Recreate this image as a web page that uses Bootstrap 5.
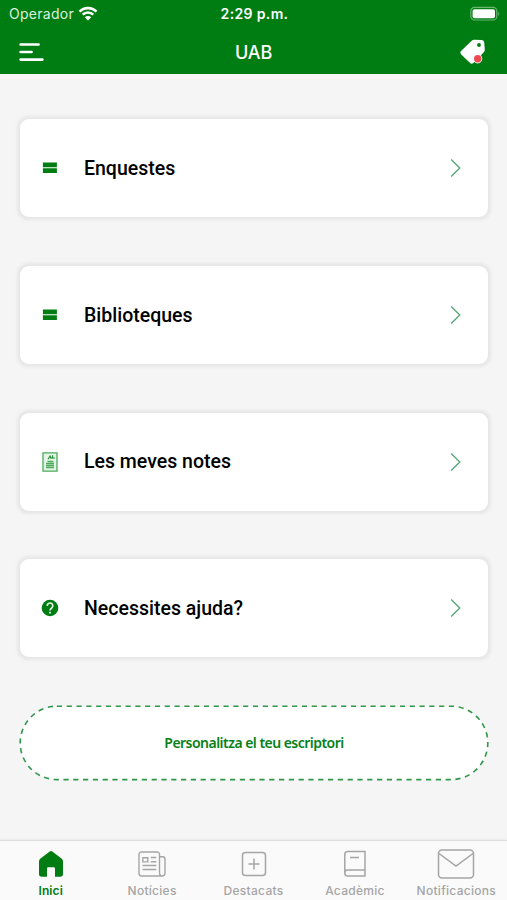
<!DOCTYPE html>
<html lang="ca">
<head>
<meta charset="utf-8">
<meta name="viewport" content="width=device-width, initial-scale=1">
<title>UAB</title>
<link href="https://cdn.jsdelivr.net/npm/bootstrap@5.3.0/dist/css/bootstrap.min.css" rel="stylesheet">
<style>
  body { height: 900px; background: #f5f5f5; font-family: Inter, "Liberation Sans", sans-serif; overflow: hidden; }
  svg { display: block; flex: none; }
  .app-head { background: #007d12; height: 74px; color: #fff; }
  .status-row { height: 27px; padding: 0 7px 0 9px; }
  .status-row > *, .title-row > * { flex: 1 1 0; }
  .carrier { font-size: 14px; letter-spacing: .28px; color: #dcf0de; }
  .clock { font-size: 14px; font-weight: 600; letter-spacing: .36px; }
  .title-row { height: 47px; padding: 3px 20px 0 19px; }
  .app-title { font-size: 18px; font-weight: 500; letter-spacing: -.1px; padding-left: 1px; }
  .tiles { padding: 45.4px 19px 0 20px; gap: 48.7px; }
  .tile { height: 98px; border-radius: 9px; background: #fff; box-shadow: 0 0 3px 2.5px #e7e7e7; color: #000; padding: 0 26px 0 20px; }
  .tile-icon { width: 20px; margin-right: 24px; }
  .tile-name { font: 500 19.5px/24px Roboto, sans-serif; padding-top: 1px; }
  .customize { margin: 47.6px 18px 0 19px; height: 76px; color: #078117; }
  .customize-label { font: 600 14px/20px "Noto Sans", sans-serif; letter-spacing: -.53px; }
  .tabs-bar { height: 60px; background: #fafafa; border-top: 1px solid #dedede; box-shadow: 0 -1px 2px #e9e9e9; color: #a5a5a5; }
  .tab-item { flex: 1 1 0; color: inherit; }
  .tab-icon { height: 43px; padding-top: 2px; }
  .tab-label { font-size: 12px; line-height: 14px; font-weight: 500; white-space: nowrap; letter-spacing: .28px; }
  .tab-item.active { color: #007d12; }
  .tab-item.active .tab-label { font-weight: 600; letter-spacing: .1px; }
</style>
</head>
<body class="d-flex flex-column">
<header class="app-head">
  <div class="status-row d-flex align-items-center">
    <div class="d-flex align-items-center gap-1">
      <span class="carrier">Operador</span>
      <svg width="20" height="16" viewBox="0 0 20 16" fill="none" stroke="#fff" stroke-width="2.6"><path d="M1.5 5.6C6.2.9 13.8.9 18.5 5.6M4.7 8.7a7.5 7.5 0 0 1 10.6 0"/><path d="M6.8 11.3a4.5 4.5 0 0 1 6.4 0L10 14.6z" fill="#fff" stroke="none"/></svg>
    </div>
    <div class="clock text-center text-nowrap">2:29 p.m.</div>
    <div class="d-flex justify-content-end">
      <svg width="30" height="16" viewBox="0 0 30 16"><rect x=".8" y="1.4" width="26" height="12.6" rx="3.8" fill="none" stroke="#69b572" stroke-width="1.2"/><rect x="2.6" y="3.2" width="22.4" height="9" rx="2" fill="#fff"/><path d="M28.3 5.4q2 2.3 0 4.6z" fill="#69b572"/></svg>
    </div>
  </div>
  <div class="title-row d-flex align-items-center">
    <div><svg width="26" height="20" viewBox="0 0 26 20" stroke="#fff" stroke-width="2.6" stroke-linecap="round"><path d="M1.6 2.5h18M1.6 10h11M1.6 17.6h21.8"/></svg></div>
    <div class="app-title text-center">UAB</div>
    <div class="d-flex justify-content-end">
      <svg width="28" height="26" viewBox="0 0 28 26"><path d="M13 1.5Q14 .6 15.3.7l7.4.3q2.3.2 2.5 2.3l.6 7.2q0 1.6-1 2.7L14.3 24q-1.6 1.4-3.2 0L2 15.3q-1.5-1.6 0-3.2z" fill="#fff"/><circle cx="20" cy="6" r="1.9" fill="#007d12"/><circle cx="18.7" cy="19.8" r="4.6" fill="#fff"/><circle cx="18.7" cy="19.8" r="3.7" fill="#ee4850"/></svg>
    </div>
  </div>
</header>
<main class="flex-grow-1">
  <div class="tiles d-flex flex-column">
    <a class="tile d-flex align-items-center text-decoration-none" href="#">
      <span class="tile-icon d-flex justify-content-center"><svg width="16" height="12" viewBox="0 0 16 12"><path d="M.9.6h14v4.7H.9zM.9 6.2h14v4.9H.9z" fill="#007d12"/></svg></span>
      <span class="tile-name flex-grow-1">Enquestes</span>
      <svg width="12" height="20" viewBox="0 0 12 20" fill="none" stroke="#58a479" stroke-width="1.3"><path d="m1.2 1.5 8.6 8.5-8.6 8.5"/></svg>
    </a>
    <a class="tile d-flex align-items-center text-decoration-none" href="#">
      <span class="tile-icon d-flex justify-content-center"><svg width="16" height="12" viewBox="0 0 16 12"><path d="M.9.6h14v4.7H.9zM.9 6.2h14v4.9H.9z" fill="#007d12"/></svg></span>
      <span class="tile-name flex-grow-1">Biblioteques</span>
      <svg width="12" height="20" viewBox="0 0 12 20" fill="none" stroke="#58a479" stroke-width="1.3"><path d="m1.2 1.5 8.6 8.5-8.6 8.5"/></svg>
    </a>
    <a class="tile d-flex align-items-center text-decoration-none" href="#">
      <span class="tile-icon d-flex justify-content-center"><svg width="16" height="20" viewBox="0 0 16 20" fill="none" stroke="#4caa5a"><path d="M1 .8h14v18.4H1z" fill="#e4f4e6" stroke-width="1.3"/><path d="m6 7.2 2-3.2 1.4 2.6M8 6h5M10.5 3.2v3" stroke="#238a35" stroke-width="1.1"/><path d="M5.5 9.5h5.8M4 11.6h8M4 13.6h8M4 15.6h8" stroke-width="1.5"/></svg></span>
      <span class="tile-name flex-grow-1">Les meves notes</span>
      <svg width="12" height="20" viewBox="0 0 12 20" fill="none" stroke="#58a479" stroke-width="1.3"><path d="m1.2 1.5 8.6 8.5-8.6 8.5"/></svg>
    </a>
    <a class="tile d-flex align-items-center text-decoration-none" href="#">
      <span class="tile-icon d-flex justify-content-center"><svg width="18" height="18" viewBox="0 0 18 18"><circle cx="9" cy="9" r="8.3" fill="#007d12"/><path d="M6.2 6.9a2.8 2.8 0 1 1 4.6 2.1C9.6 9.9 9 10.2 9 11.5" fill="none" stroke="#e4f5e6" stroke-width="1.6"/><path d="M8.1 12.7h1.8v1.8H8.1z" fill="#e4f5e6"/></svg></span>
      <span class="tile-name flex-grow-1">Necessites ajuda?</span>
      <svg width="12" height="20" viewBox="0 0 12 20" fill="none" stroke="#58a479" stroke-width="1.3"><path d="m1.2 1.5 8.6 8.5-8.6 8.5"/></svg>
    </a>
  </div>
  <div class="customize d-grid" role="button">
    <svg style="grid-area:1/1" width="470" height="76" viewBox="0 0 470 76"><rect x="1.2" y="1.2" width="467.6" height="73.4" rx="36.7" fill="#fff" stroke="#30974a" stroke-width="1.6" stroke-dasharray="5.2 4.6"/></svg>
    <span class="customize-label align-self-center text-center" style="grid-area:1/1">Personalitza el teu escriptori</span>
  </div>
</main>
<nav class="tabs-bar d-flex">
  <a class="tab-item active text-decoration-none d-flex flex-column align-items-center" href="#">
    <span class="tab-icon d-flex align-items-center"><svg width="26" height="28" viewBox="0 0 26 28"><path d="M11.7 1.6q1.3-1 2.6 0l9.2 7q1.5 1.1 1.5 3V24q0 2.8-2.8 2.8H17V18.4q0-1.2-1.2-1.2h-5.6q-1.2 0-1.2 1.2v8.4H3.8Q1 26.8 1 24V11.6q0-1.9 1.5-3z" fill="currentColor"/></svg></span>
    <span class="tab-label">Inici</span>
  </a>
  <a class="tab-item text-decoration-none d-flex flex-column align-items-center" href="#">
    <span class="tab-icon d-flex align-items-center"><svg width="28" height="26" viewBox="0 0 28 26" fill="none" stroke="currentColor" stroke-width="1.4"><path d="M21.5 21V3.5Q21.5 1 19 1H3.5Q1 1 1 3.5v18.8Q1 25 3.7 25H24q3 0 3-3V8q0-2.3-2.3-2.3h-3.2V21q0 4 2.5 4"/><path d="M4.8 6.7h5v4.2h-5zM12.8 6.5h5.5M12.8 10.8h5.5M4.5 14.5h13.8M4.5 18.5h13.8"/></svg></span>
    <span class="tab-label">Notícies</span>
  </a>
  <a class="tab-item text-decoration-none d-flex flex-column align-items-center" href="#">
    <span class="tab-icon d-flex align-items-center"><svg width="26" height="26" viewBox="0 0 26 26" fill="none" stroke="currentColor" stroke-width="1.5"><rect x="1.5" y="1.5" width="23" height="23" rx="3"/><path d="M13 7.5v11M7.5 13h11"/></svg></span>
    <span class="tab-label">Destacats</span>
  </a>
  <a class="tab-item text-decoration-none d-flex flex-column align-items-center" href="#">
    <span class="tab-icon d-flex align-items-center"><svg width="24" height="28" viewBox="0 0 24 28" fill="none" stroke="currentColor" stroke-width="1.5"><path d="M22 20H4.5Q1.8 20 1.8 23t2.7 3H22V1.5H4.8q-3 0-3 3V23M7 7.5h9"/></svg></span>
    <span class="tab-label">Acadèmic</span>
  </a>
  <a class="tab-item text-decoration-none d-flex flex-column align-items-center" href="#">
    <span class="tab-icon d-flex align-items-center"><svg width="38" height="30" viewBox="0 0 38 30" fill="none" stroke="currentColor" stroke-width="1.5"><rect x="1.5" y="1" width="35" height="28" rx="3.5"/><path d="M2 4.5 19 17 36 4.5"/></svg></span>
    <span class="tab-label">Notificacions</span>
  </a>
</nav>
<script src="https://cdn.jsdelivr.net/npm/bootstrap@5.3.0/dist/js/bootstrap.bundle.min.js"></script>
</body>
</html>
